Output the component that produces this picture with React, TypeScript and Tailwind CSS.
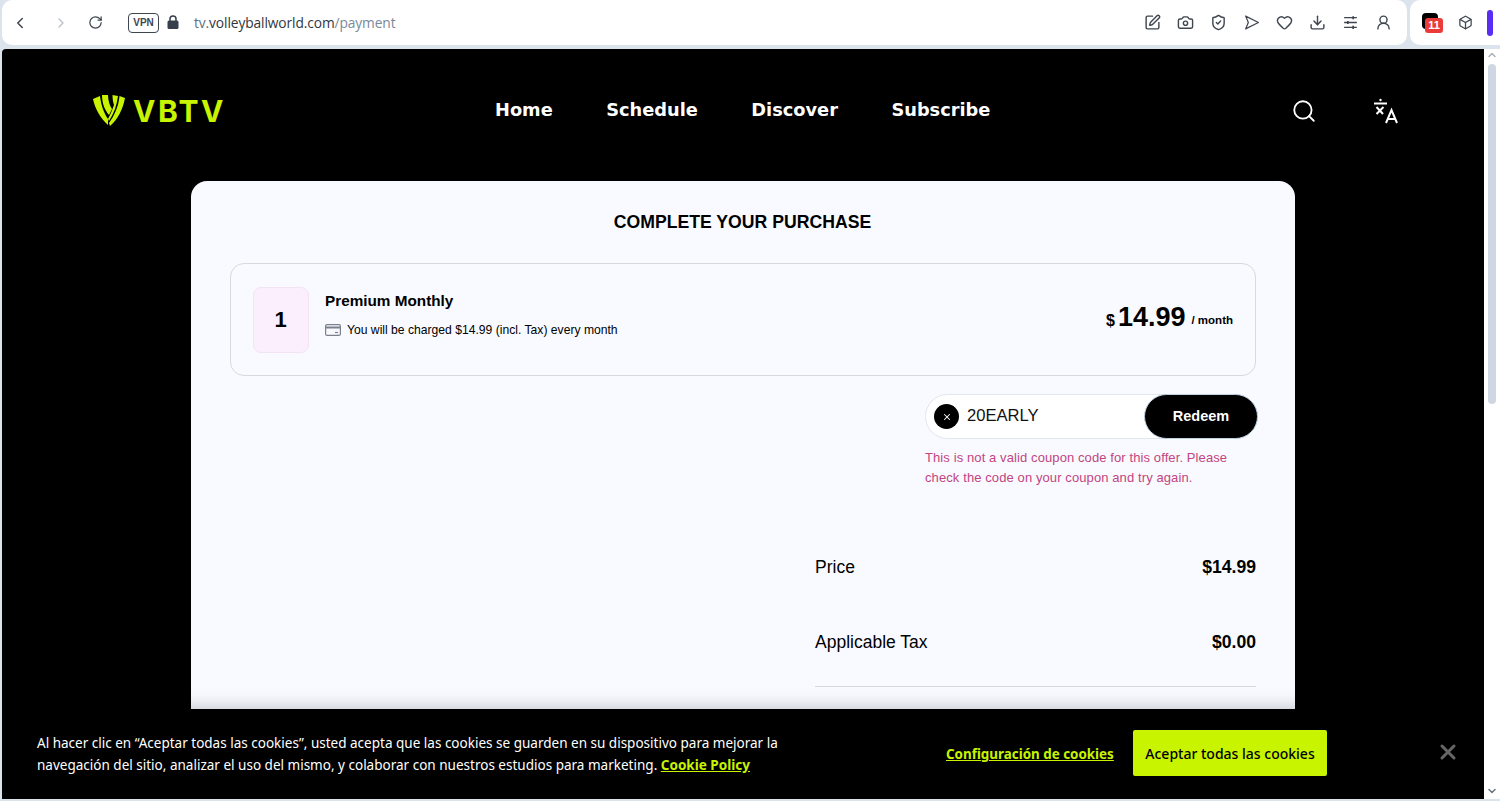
import { Box, Camera, ChevronLeft, ChevronRight, ChevronUp, ChevronDown, Download, Heart, RotateCw, Search, ShieldCheck, SquarePen, UserRound, X } from 'lucide-react'

const sans = 'font-["Liberation_Sans",Arial,sans-serif]'

function Logo() {
  return (
    <svg viewBox="0 0 32 31" className="w-[32px] h-[31px]" fill="#c9f400">
      <path d="M0 4l7-3c1 9 4 17 8 23l0 6C8 24 2 14 0 4z" />
      <path d="M9 0l6 0c0 6 2 11 4 14l-3 6C11 14 9 7 9 0z" />
      <path d="M19.500 0l5.500 1c-1 9-4 17-9 25l-1-2c3-6 5-11 6-14-1-3-1.500-6-1.500-10z" />
      <path d="M26.500 1l5.500 2c-2 11-7 21-15 28l-1-3c5-7 9.500-16 10.500-27z" />
    </svg>
  )
}

function Translate() {
  return (
    <svg viewBox="0 0 26 26" className="w-[26px] h-[26px]" fill="none" stroke="white" strokeWidth="2">
      <path d="M1 5.500h13M3.500 9l6.500 7M10.500 9l-7 7" />
      <circle cx="7.500" cy="2" r="1.200" fill="white" stroke="none" />
      <path d="M13 25l5.500-13 5.500 13M15 21h7" />
    </svg>
  )
}

function Row({ label, value }: { label: string; value: string }) {
  return (
    <div className="flex items-center justify-between h-[24px]">
      <span className="text-[17.500px] text-black">{label}</span>
      <span className="text-[17.600px] font-bold text-black">{value}</span>
    </div>
  )
}

export default function App() {
  const iconCls = 'w-[17px] h-[17px] text-[#3f4650]'
  return (
    <div className={`w-[1500px] h-[801px] flex flex-col overflow-hidden bg-[#dbe3ec] ${sans}`}>
      <div className="h-[49px] flex gap-[3px] pl-[2px] pb-[4px] shrink-0">
        <div className="flex-1 bg-white rounded-[10px] flex items-center">
          <ChevronLeft className="w-[18px] h-[18px] ml-[9px] text-[#3f4650]" />
          <ChevronRight className="w-[16px] h-[16px] ml-[24px] text-[#b9bfc7]" />
          <RotateCw className="w-[15px] h-[15px] ml-[19px] text-[#3f4650]" />
          <span className="ml-[25px] w-[31px] h-[20px] border border-[#3f4650] rounded-[4px] flex items-center justify-center text-[10px] font-bold text-[#3f4650]">VPN</span>
          <svg viewBox="0 0 12 14" className="w-[12px] h-[14px] ml-[8px] mb-[1px]" fill="#36404c">
            <path d="M3 6V4a3 3 0 016 0v2" fill="none" stroke="#36404c" strokeWidth="1.500" />
            <rect x="0.500" y="5.500" width="11" height="8.500" rx="1.500" />
          </svg>
          <span className="ml-[15px] mt-[1px] text-[13.750px] font-['Open_Sans',sans-serif] text-[#2f3640] tracking-[-0.1px]">
            <span className="text-[#5f6f80]">tv.</span>volleyballworld.com<span className="text-[#7a8999]">/payment</span>
          </span>
          <div className="ml-auto flex items-center gap-[16px] mr-[15px]">
            <SquarePen className={iconCls} />
            <Camera className={iconCls} />
            <ShieldCheck className={iconCls} />
            <svg viewBox="0 0 16 16" className={iconCls} fill="none" stroke="currentColor" strokeWidth="1.200" strokeLinejoin="round">
              <path d="M2.500 2l12 6-12 6 2.500-6-2.500-6z" />
            </svg>
            <Heart className={iconCls} />
            <Download className={iconCls} />
            <svg viewBox="0 0 16 16" className={iconCls} fill="none" stroke="currentColor" strokeWidth="1.200">
              <path d="M2 3.500h12M2 8h12M2 12.500h12" />
              <path d="M10.500 2v3M5.500 6.500v3M10.500 11v3" strokeWidth="1.600" />
            </svg>
            <UserRound className={iconCls} />
          </div>
        </div>
        <div className="w-[90px] bg-white rounded-l-[10px] flex items-center">
          <div className="relative ml-[12px] mb-[4px] w-[16px] h-[16px] rounded-[4px] bg-black">
            <span className="absolute left-[3px] top-[5px] w-[18px] h-[15px] bg-[#ea3a3a] rounded-[3px] text-white text-[11px] leading-[15px] font-bold text-center">11</span>
          </div>
          <Box className="w-[15px] h-[15px] ml-[20px] text-[#3f4650]" />
          <span className="ml-[14px] w-[6px] h-[26px] rounded-full bg-[#5a2df5]" />
        </div>
      </div>

      <div className="flex-1 flex min-h-0 pl-[2px] pb-[2px]">
        <div className="relative flex-1 bg-black rounded-tl-[4px] overflow-hidden">
          <header className="h-[132px] flex items-center pl-[91px] pr-[85px] pb-[9px]">
            <div className="flex items-center gap-[8px] w-[402px]">
              <Logo />
              <span className="text-[30px] font-bold tracking-[2.500px] text-[#c9f400] font-['Inter',sans-serif] leading-none">VBTV</span>
            </div>
            <nav className="flex gap-[53.500px] text-white text-[17.800px] font-bold font-['DejaVu_Sans',sans-serif]">
              <span>Home</span>
              <span>Schedule</span>
              <span>Discover</span>
              <span>Subscribe</span>
            </nav>
            <div className="ml-auto flex items-center gap-[56px]">
              <Search className="w-[26px] h-[26px] text-white" strokeWidth={1.700} />
              <Translate />
            </div>
          </header>

          <div className="ml-[189px] w-[1104px] h-[700px] bg-[#f9faff] rounded-t-[16px] px-[39px] pt-[29px]">
            <h1 className="text-center text-[17.650px] font-bold text-black leading-[24px] pr-[1px]">COMPLETE YOUR PURCHASE</h1>
            <div className="mt-[29px] h-[113px] border border-[#d6d9de] rounded-[14px] flex items-center pl-[22px] pr-[22px]">
              <div className="w-[56px] h-[66px] rounded-[8px] bg-[#fbeefd] border border-[#f3e4f5] flex items-center justify-center text-[22px] font-bold text-black pr-[1px]">1</div>
              <div className="ml-[16px] mb-[11px]">
                <div className="text-[15.300px] font-bold text-black leading-[20px]">Premium Monthly</div>
                <div className="mt-[11px] flex items-center gap-[6px] text-[12.150px] leading-[16px] text-black">
                  <svg viewBox="0 0 16 12" className="w-[16px] h-[12px]" fill="none" stroke="#7b808c" strokeWidth="1.200">
                    <rect x="0.600" y="0.600" width="14.800" height="10.800" rx="1.500" />
                    <path d="M1 3.500h14" strokeWidth="2" />
                    <path d="M10 8.500h3" />
                  </svg>
                  You will be charged $14.99 (incl. Tax) every month
                </div>
              </div>
              <div className="ml-auto mb-[5px] flex items-end text-black font-bold leading-none">
                <span className="text-[16px] mb-[1.500px]">$</span>
                <span className="ml-[3px] text-[27px]">14.99</span>
                <span className="ml-[6px] text-[11.500px] mb-[4px]">/ month</span>
              </div>
            </div>

            <div className="ml-auto mt-[18px] w-[333px] mr-[-2px]">
              <div className="h-[45px] rounded-full bg-white border border-[#e3e6ec] flex items-center pl-[8px]">
                <span className="w-[25px] h-[25px] rounded-full bg-black flex items-center justify-center">
                  <X className="w-[10px] h-[10px] text-white" strokeWidth={2.500} />
                </span>
                <span className="ml-[8px] text-[16.600px] text-[#111]">20EARLY</span>
                <span className="ml-auto w-[114px] h-[45px] mr-[-1px] rounded-full bg-black border border-[#bcd0e6] flex items-center justify-center text-white text-[14.500px] font-bold">Redeem</span>
              </div>
              <p className="mt-[9px] text-[13px] leading-[20px] text-[#c2457f] tracking-[0.1px] whitespace-nowrap">This is not a valid coupon code for this offer. Please<br />check the code on your coupon and try again.</p>
            </div>

            <div className="ml-auto mt-[67px] w-[441px]">
              <Row label="Price" value="$14.99" />
              <div className="h-[51px]" />
              <Row label="Applicable Tax" value="$0.00" />
              <div className="mt-[32px] border-t border-[#d6d9de]" />
            </div>
          </div>

          <div className="absolute left-0 right-0 bottom-0 h-[90px] bg-black flex items-center pl-[35px] pb-[2px] shadow-[0_0_18px_rgba(0,0,0,0.25)]">
            <p className="w-[770px] mt-[2px] shrink-0 text-[13.530px] leading-[22px] text-white font-['Noto_Sans',sans-serif]">
              Al hacer clic en “Aceptar todas las cookies”, usted acepta que las cookies se guarden en su dispositivo para mejorar la navegación del sitio, analizar el uso del mismo, y colaborar con nuestros estudios para marketing.{' '}
              <span className="font-bold text-[#c9f400] underline">Cookie Policy</span>
            </p>
            <span className="ml-[139px] mt-[2px] w-[168px] shrink-0 whitespace-nowrap text-[13.400px] font-bold text-[#c9f400] underline font-['Noto_Sans',sans-serif]">Configuración de cookies</span>
            <span className="ml-[19px] w-[194px] h-[46px] shrink-0 bg-[#c9f400] rounded-[2px] flex items-center justify-center text-[14px] font-medium text-black font-['Noto_Sans',sans-serif]">Aceptar todas las cookies</span>
            <X className="ml-[109px] mb-[2px] w-[24px] h-[24px] text-[#666]" strokeWidth={3} />
          </div>
        </div>
        <div className="w-[16px] bg-white flex flex-col items-center justify-between">
          <div className="w-full flex flex-col items-center">
            <ChevronUp className="w-[12px] h-[12px] text-[#aab2bc]" strokeWidth={3} />
            <div className="mt-[3px] w-[8px] h-[340px] rounded-full bg-[#cfd8e2]" />
          </div>
          <ChevronDown className="w-[12px] h-[12px] text-[#6b7480] mb-[2px]" strokeWidth={3} />
        </div>
      </div>
    </div>
  )
}
